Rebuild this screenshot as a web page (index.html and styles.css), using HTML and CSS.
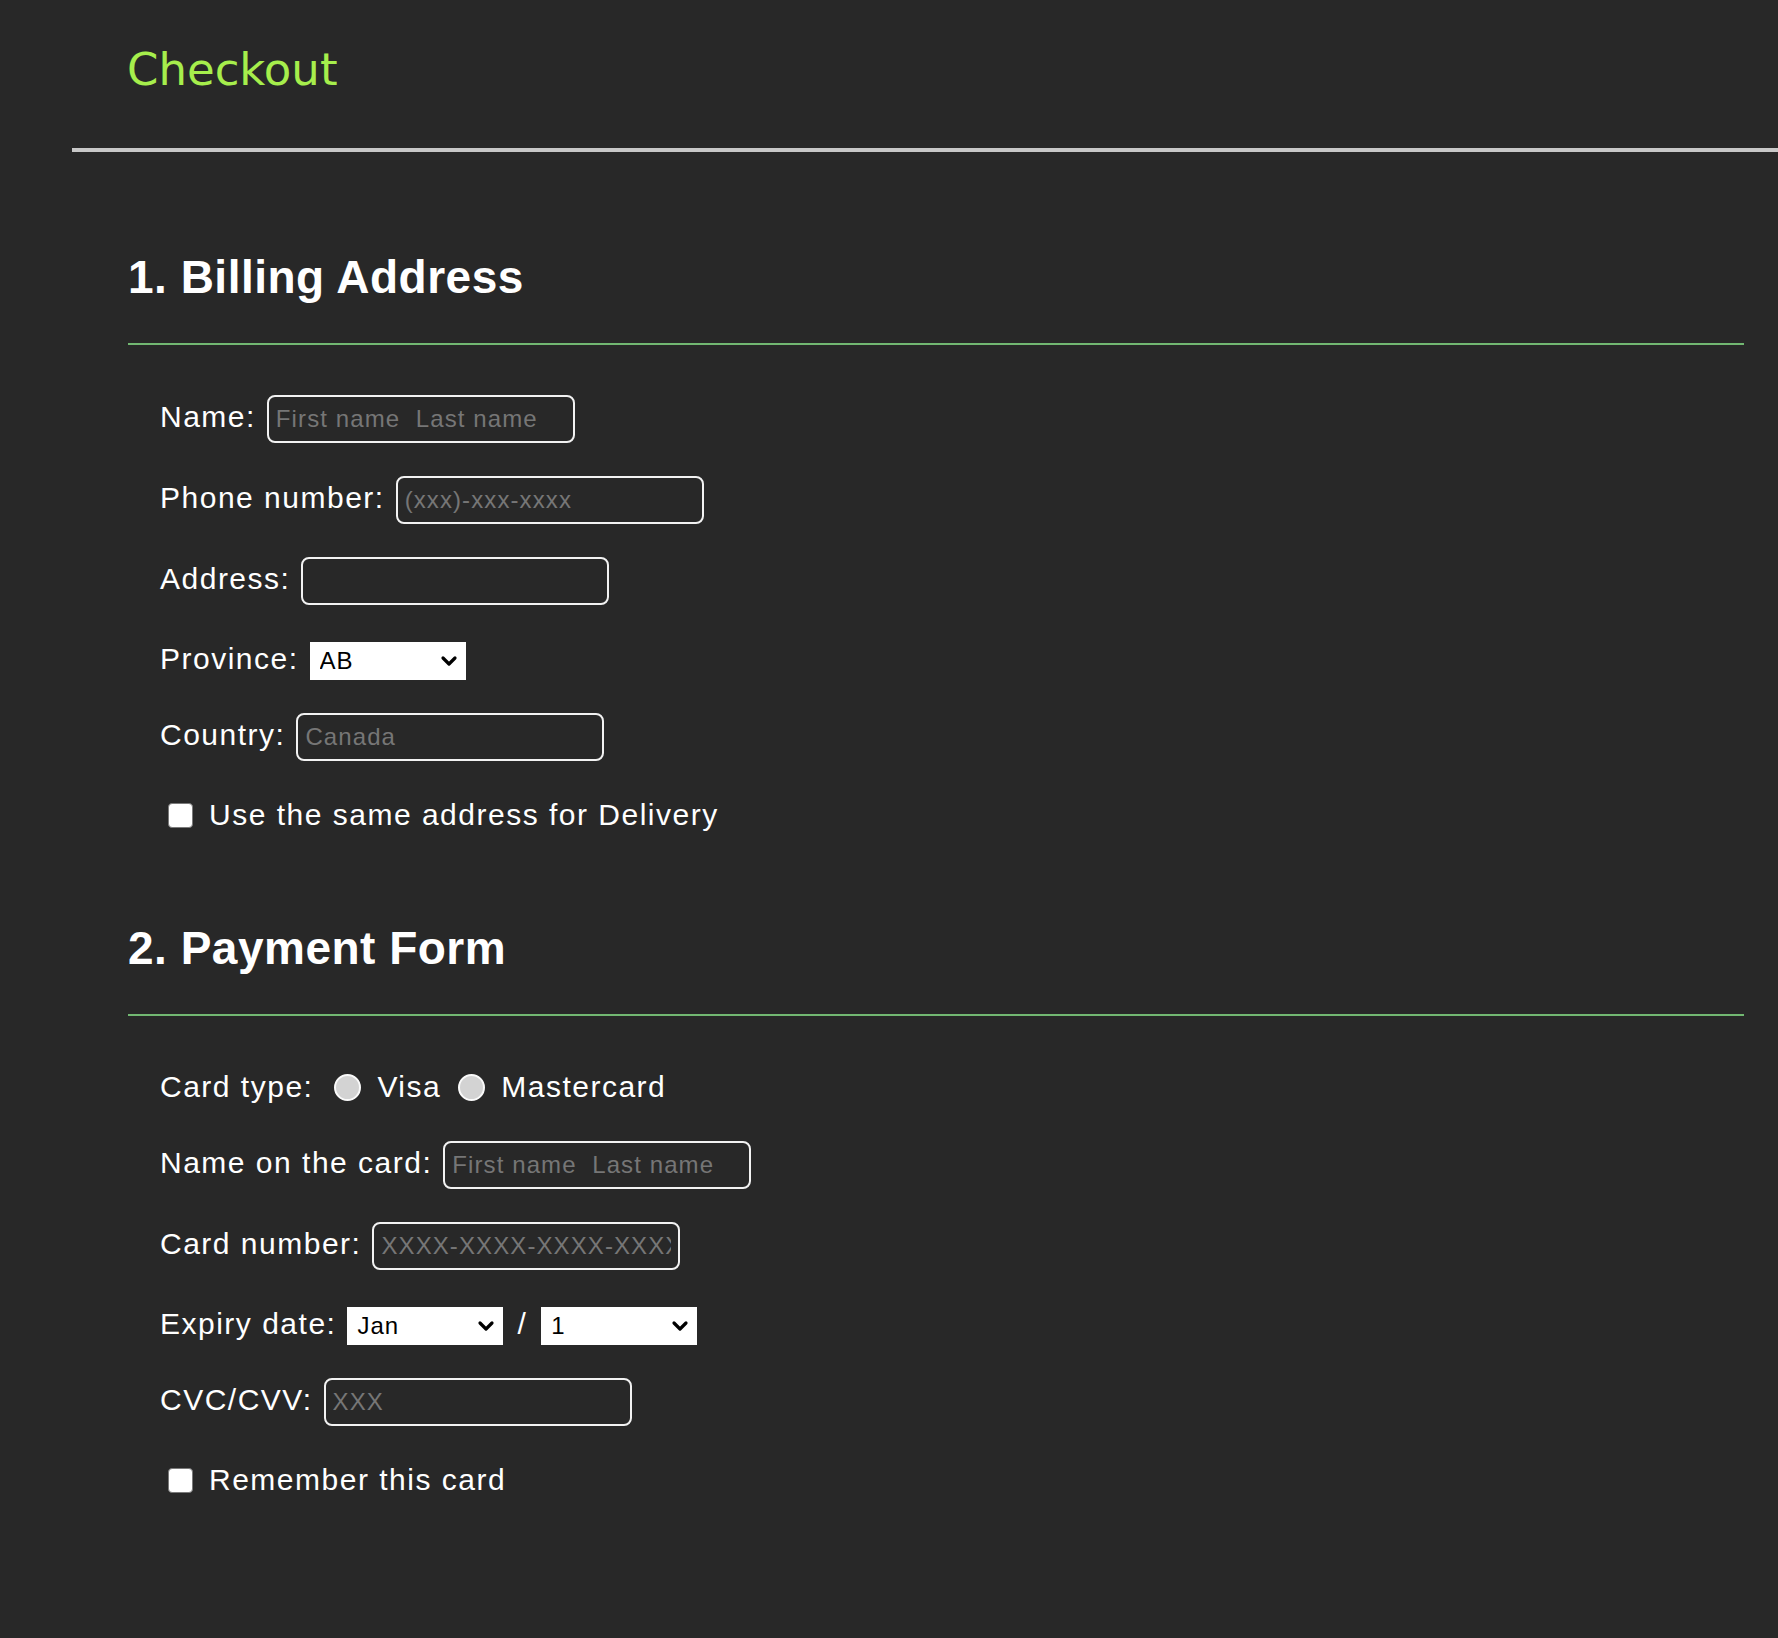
FILE: index.html
```html
<!DOCTYPE html>
<html lang="en">
<head>
<meta charset="utf-8">
<title>Checkout</title>
<link rel="stylesheet" href="styles.css">
</head>
<body>
<header class="site-header">
  <h1 class="brand">Checkout</h1>
</header>
<main class="content">
  <section class="panel">
    <h2 class="panel-title">1. Billing Address</h2>
    <form class="form">
      <div class="field">
        <label class="field-label" for="name">Name:</label>
        <input class="text-input" id="name" type="text" placeholder="First name  Last name">
      </div>
      <div class="field">
        <label class="field-label" for="phone">Phone number:</label>
        <input class="text-input" id="phone" type="text" placeholder="(xxx)-xxx-xxxx">
      </div>
      <div class="field">
        <label class="field-label" for="address">Address:</label>
        <input class="text-input" id="address" type="text">
      </div>
      <div class="field">
        <label class="field-label" for="province">Province:</label>
        <span class="select-wrap">
          <select class="select" id="province">
            <option>AB</option><option>BC</option><option>MB</option><option>NB</option>
            <option>NL</option><option>NS</option><option>NT</option><option>NU</option>
            <option>ON</option><option>PE</option><option>QC</option><option>SK</option><option>YT</option>
          </select>
          <svg class="chev" width="18" height="12" viewBox="0 0 18 12" aria-hidden="true"><path d="M3 3l6 6 6-6" fill="none" stroke="#000" stroke-width="3.2" stroke-linecap="round" stroke-linejoin="round"/></svg>
        </span>
      </div>
      <div class="field">
        <label class="field-label" for="country">Country:</label>
        <input class="text-input" id="country" type="text" placeholder="Canada">
      </div>
      <label class="check">
        <input class="checkbox" type="checkbox">
        <span>Use the same address for Delivery</span>
      </label>
    </form>
  </section>

  <section class="panel">
    <h2 class="panel-title">2. Payment Form</h2>
    <form class="form">
      <div class="field field--choice">
        <span class="field-label">Card type:</span>
        <div class="choices">
          <label class="choice"><input class="radio" type="radio" name="card"><span>Visa</span></label>
          <label class="choice"><input class="radio" type="radio" name="card"><span>Mastercard</span></label>
        </div>
      </div>
      <div class="field">
        <label class="field-label" for="cardname">Name on the card:</label>
        <input class="text-input" id="cardname" type="text" placeholder="First name  Last name">
      </div>
      <div class="field">
        <label class="field-label" for="cardnum">Card number:</label>
        <input class="text-input" id="cardnum" type="text" placeholder="XXXX-XXXX-XXXX-XXXX">
      </div>
      <div class="field">
        <label class="field-label" for="month">Expiry date:</label>
        <span class="select-wrap">
          <select class="select" id="month">
            <option>Jan</option><option>Feb</option><option>Mar</option><option>Apr</option>
            <option>May</option><option>Jun</option><option>Jul</option><option>Aug</option>
            <option>Sep</option><option>Oct</option><option>Nov</option><option>Dec</option>
          </select>
          <svg class="chev" width="18" height="12" viewBox="0 0 18 12" aria-hidden="true"><path d="M3 3l6 6 6-6" fill="none" stroke="#000" stroke-width="3.2" stroke-linecap="round" stroke-linejoin="round"/></svg>
        </span>
        <span class="field-label slash">/</span>
        <span class="select-wrap">
          <select class="select" id="year">
            <option>1</option><option>2</option><option>3</option><option>4</option><option>5</option>
            <option>6</option><option>7</option><option>8</option><option>9</option><option>10</option>
          </select>
          <svg class="chev" width="18" height="12" viewBox="0 0 18 12" aria-hidden="true"><path d="M3 3l6 6 6-6" fill="none" stroke="#000" stroke-width="3.2" stroke-linecap="round" stroke-linejoin="round"/></svg>
        </span>
      </div>
      <div class="field">
        <label class="field-label" for="cvc">CVC/CVV:</label>
        <input class="text-input" id="cvc" type="text" placeholder="XXX">
      </div>
      <label class="check">
        <input class="checkbox" type="checkbox">
        <span>Remember this card</span>
      </label>
    </form>
  </section>
</main>
</body>
</html>
```

FILE: styles.css
```css
* {
  box-sizing: border-box;
}

body {
  margin: 0;
  background: #282828;
  color: #fff;
  font-family: "Liberation Sans", Arial, sans-serif;
}

.site-header {
  margin-left: 72px;
  padding: 45px 0 53px 55px;
  border-bottom: 4px solid #c8c8c8;
}

.brand {
  margin: 0;
  font-family: "DejaVu Sans", "Liberation Sans", sans-serif;
  font-size: 45px;
  line-height: 50px;
  font-weight: 400;
  color: #a6ee4c;
}

.content {
  margin: 0 34px 0 128px;
  padding-top: 13px;
}

.panel {
  margin-top: 86px;
}

.panel-title {
  margin: 0;
  font-size: 46px;
  line-height: 53px;
  font-weight: 700;
  letter-spacing: 0.5px;
  color: #fff;
  padding-bottom: 39px;
  border-bottom: 2px solid #72b872;
}

.form {
  margin-top: 50px;
  padding-left: 32px;
  display: flex;
  flex-direction: column;
  align-items: flex-start;
  gap: 33px;
}

.field {
  display: flex;
  align-items: baseline;
  gap: 11px;
}

.field--choice {
  align-items: center;
}

.field-label {
  font-size: 30px;
  line-height: 42px;
  letter-spacing: 1.5px;
  color: #fff;
}

.slash {
  padding: 0 3px;
}

.text-input {
  width: 308px;
  height: 48px;
  margin: 0;
  padding: 0 7px;
  border: 2px solid #f2f2f2;
  border-radius: 8px;
  background: transparent;
  color: #fff;
  font-family: "Liberation Sans", Arial, sans-serif;
  font-size: 24px;
  letter-spacing: 1.1px;
  outline: none;
}

.text-input::placeholder {
  color: #767676;
  opacity: 1;
  white-space: pre;
}

.select-wrap {
  position: relative;
  display: inline-flex;
}

.select {
  -webkit-appearance: none;
  appearance: none;
  width: 156px;
  height: 38px;
  margin: 0;
  padding: 0 0 0 10px;
  border: 0;
  border-radius: 0;
  background: #fff;
  color: #000;
  font-family: "Liberation Sans", Arial, sans-serif;
  font-size: 24px;
  letter-spacing: 1px;
  outline: none;
}

.chev {
  position: absolute;
  right: 8px;
  top: 50%;
  transform: translateY(-50%);
  pointer-events: none;
}

.choices {
  display: flex;
  align-items: center;
  gap: 17px;
  margin-left: 10px;
}

.choice {
  display: flex;
  align-items: center;
  gap: 16px;
  font-size: 30px;
  line-height: 42px;
  letter-spacing: 1.5px;
}

.radio {
  -webkit-appearance: none;
  appearance: none;
  margin: 0;
  width: 27px;
  height: 27px;
  border-radius: 50%;
  border: 2px solid #fafafa;
  background: #d3d3d3;
}

.check {
  display: flex;
  align-items: center;
  gap: 16px;
  padding-left: 8px;
  font-size: 30px;
  line-height: 42px;
  letter-spacing: 1.5px;
}

.checkbox {
  -webkit-appearance: none;
  appearance: none;
  margin: 0;
  width: 25px;
  height: 25px;
  border: 1.5px solid #7a7a7a;
  border-radius: 4px;
  background: #fff;
}
```
